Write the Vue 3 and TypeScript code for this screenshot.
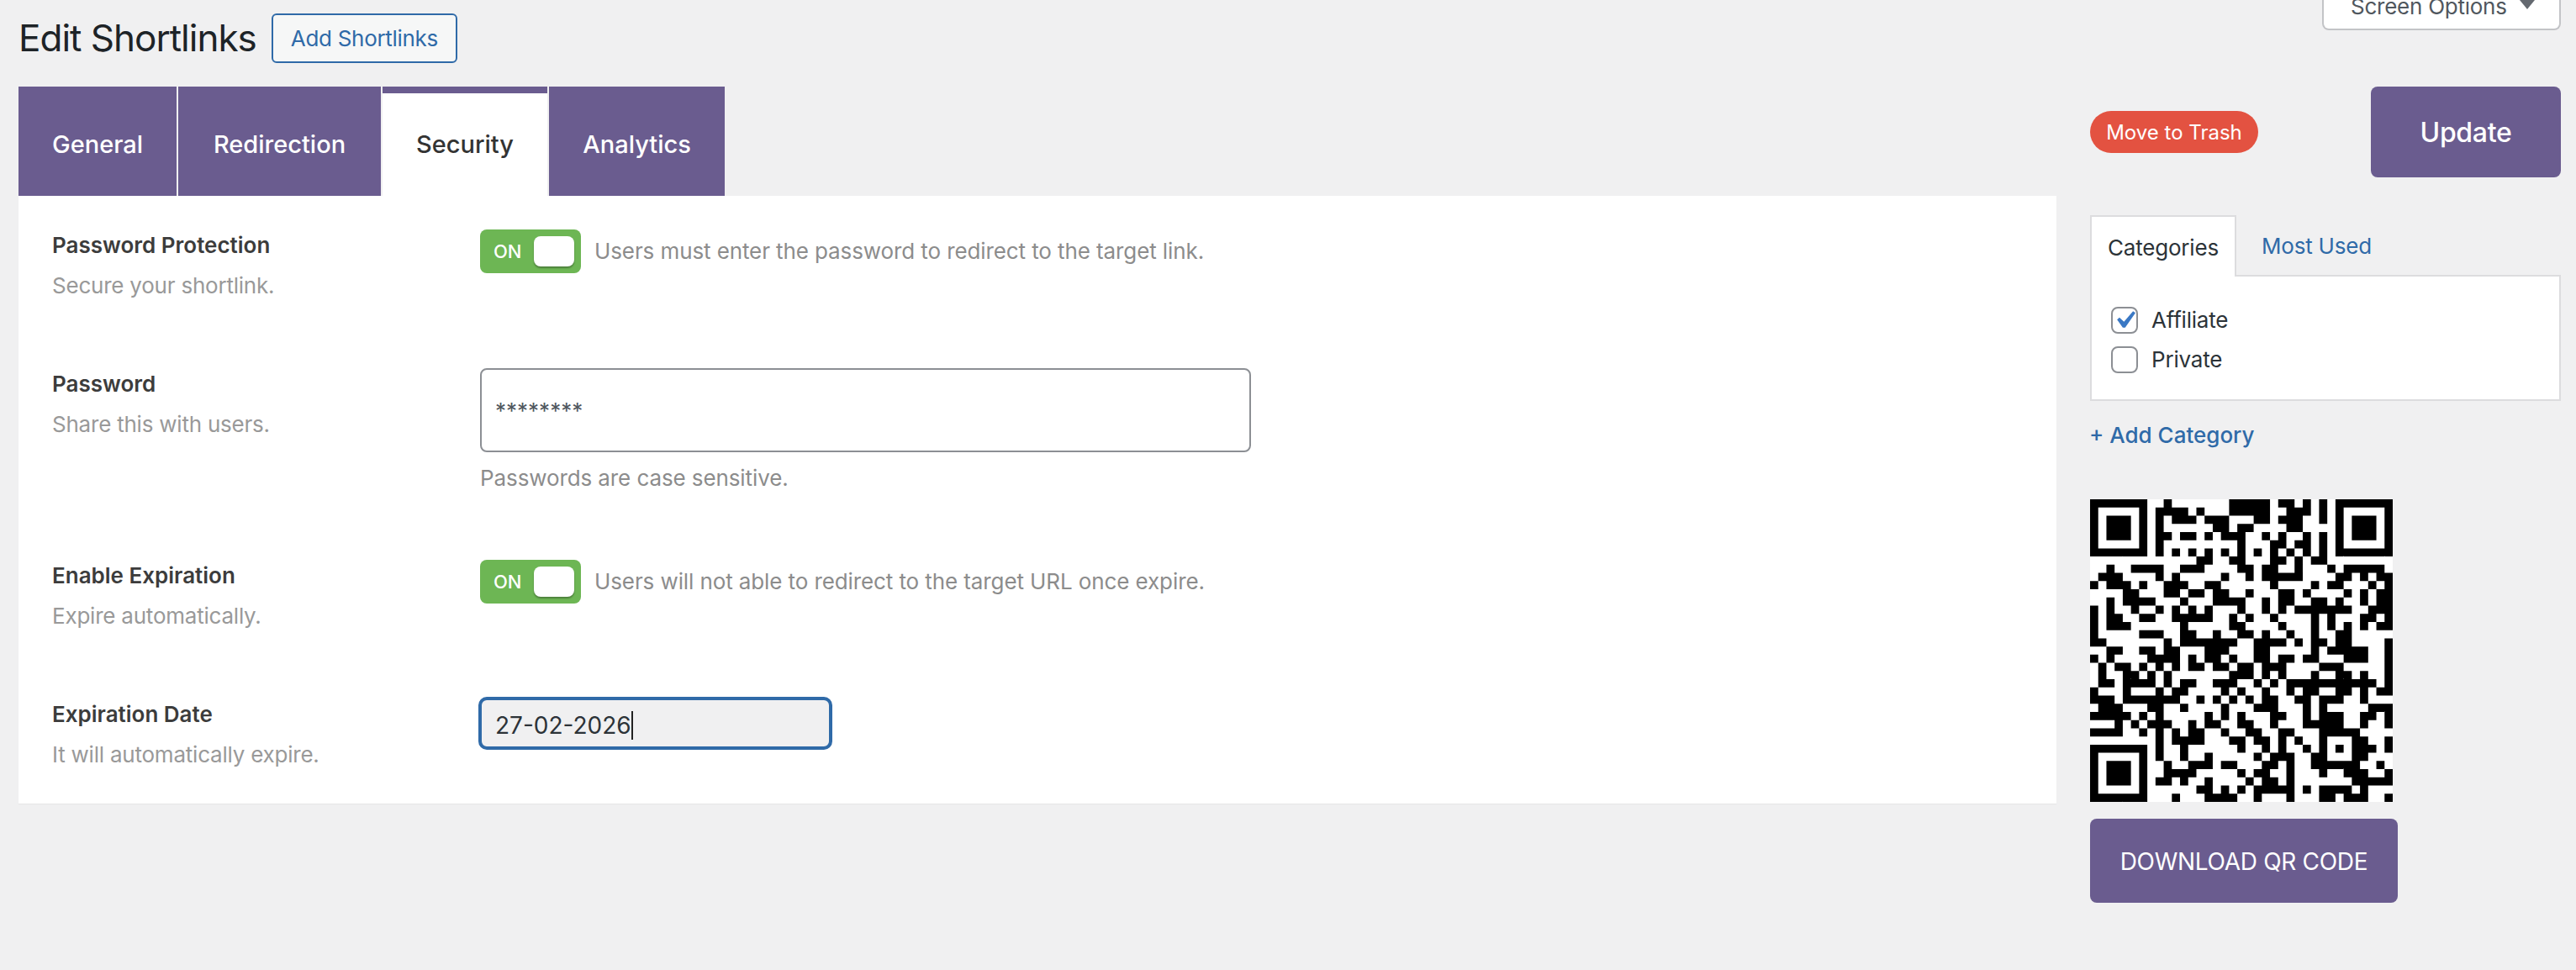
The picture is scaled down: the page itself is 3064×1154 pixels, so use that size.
<script setup lang="ts">
const qrRows: string[] = [
  '1111111 00 1 0000000 11111 0 11 0 1 0 1 0 1111111',
  '1000001 0 1111 0 1 000 11111 00 111 0 1 0 1000001',
  '1011101 0 1 0 111 0 111 000 11 0 111 00 1 0 1011101',
  '1011101 0 1 000000 11 0 11 0000 11 000 0 1011101',
  '1011101 0 11 0 11 0 1 0 111 00 1 0 1 00 1 0 1 0 1011101',
  '1000001 0 1 000000000 1 000 11 0 11 0 1 0 1000001',
  '1111111 0 101010101010101010101 0 1111111',
  '00000000 0 0000 11 00 11 000 11 0 1 0 11 0 0000000',
  '00100 1111 00 111 0000 11 0 11 00 1 000 1 0 11111 0',
  '0 111 0000 1 0 1 00000 1 00 1 0 11111 0000 11 0 1 0 11',
  '1 0 111 0 1 00 111 00 11 000000 1 0000 1 0 11 000 1 0 1',
  '0000 11 000 11 0 11 0 11 00 1 000 11 0 1 0000 1 0 1 0 11',
  '00 1 0 1111 000 1 000 1111 00 1 0 11 00 11 0 1 00 1 0 11',
  '1 0 1 00 1 00 1 0 1 0 1 0 1 000 1 00 1 0 1 0 1111111 00 111',
  '1 0 11 00 11 00 11111 00 1 0 1 00 1 0000 1 0 1 000 11 0 1',
  '1 0 111 000000 1 00000 11 0000 1 000 1 0 1 0 1 0 1 0 11',
  '1 00000 111 00 11 00 1 00 11 0 1 00 1 00 1 00 11 00000',
  '11 0000000 1 0 1111111 00 1111 0 1 0 11 0 11 0000 1',
  '00 11 00 11 0 11 000 111 000 11 00000 1 0 11111 00 1',
  '1 0 1 0000 1111 0 1 0 11 0 1 00 11 0 11 0 11 000 111 00 1',
  '0 1 0 11 0 1 0 1 0 1 0 11 0 11 0 11 0 111 0000 111 00000 1',
  '0 1 00 11 0 1 0 1 0000000 111 0 1 0 1 000 1 00 11 0 1 00 1',
  '0 11 0 1111 0 1 0 11 00 111 00 1 0 1 0 11111111111 0 1',
  '1 000 1 000 1 0 11 0000 1 0 1 00 1 00 1 0 11 00 11 0 1 0 11',
  '111 0 1111111 00 1 0 1 0 1 0 1 0 11 00 11 0 111 00 1 000',
  '0 111 000 11 00 1 0000 1 000 111 000 1 0 1 00000 111',
  '11111 0 1 0 1 00000 1 0 1 0 1 000 11 00 1 0 111 00 11 0 1',
  '000 1 0 1 0 111 00 1 0 11 00 11 00 1 000 11111 00 1 00 1',
  '1111 00 1 0 1 0 1 0 11 00 1 00 11 00 11 000 11111 0000',
  '00000000 1 0 1111 000 11 0 11 0 1 0 1 00 1 000 11 00 1',
  '1111111 0 1 00 1 000000 1 00 1 0 1 00 1 0 1 0 1 0 111 0 1',
  '1000001 0 1 00 1 00 1 00000 1 0 111 00 11 000 11 000',
  '1011101 00 1 00 111 0 11 000 11 0 1 00 111111 00 1 0',
  '1011101 00 1111 00000 1 0 11 00 1 000 1 00 111 00 1',
  '1011101 0 11 0 1 00 1 0000 1 0 11 0 1 0000000 11111',
  '1000001 000000 11 0 1 0 1 0 11111 0 1 0 1111 0 1 000',
  '1111111 000 1 000 1111 00 1 000 1 000 11 0 111 00 1',
]

const qrPath: string = qrRows
  .map((row, y) =>
    [...row.replace(/ /g, '')]
      .map((cell, x) => (cell === '1' ? `M${x} ${y}h1v1h-1z` : ''))
      .join(''),
  )
  .join('')

interface Field {
  label: string
  desc: string
  kind: 'toggle' | 'password' | 'date'
  hint: string
}

const fields: Field[] = [
  {
    label: 'Password Protection',
    desc: 'Secure your shortlink.',
    kind: 'toggle',
    hint: 'Users must enter the password to redirect to the target link.',
  },
  {
    label: 'Password',
    desc: 'Share this with users.',
    kind: 'password',
    hint: 'Passwords are case sensitive.',
  },
  {
    label: 'Enable Expiration',
    desc: 'Expire automatically.',
    kind: 'toggle',
    hint: 'Users will not able to redirect to the target URL once expire.',
  },
  {
    label: 'Expiration Date',
    desc: 'It will automatically expire.',
    kind: 'date',
    hint: '',
  },
]

const tabs: string[] = ['General', 'Redirection', 'Security', 'Analytics']
</script>

<template>
  <div class="page">
    <button class="screen-options">
      <span>Screen Options</span>
      <svg class="screen-arrow" width="18" height="11" viewBox="0 0 18 11"><path d="M0 0h18L9 11z" /></svg>
    </button>

    <main class="main">
      <header class="head">
        <h1 class="title">Edit Shortlinks</h1>
        <a class="add-btn">Add Shortlinks</a>
      </header>

      <nav class="tabs">
        <div v-for="tab in tabs" :key="tab" class="tab" :class="{ active: tab === 'Security' }">{{ tab }}</div>
      </nav>

      <section class="panel">
        <div v-for="field in fields" :key="field.label" class="row">
          <div class="label-col">
            <div class="label">{{ field.label }}</div>
            <div class="desc">{{ field.desc }}</div>
          </div>
          <div class="value-col" :class="{ 'value-date': field.kind === 'date' }">
            <div v-if="field.kind === 'toggle'" class="toggle-line">
              <div class="toggle">
                <span class="on">ON</span>
                <span class="knob"></span>
              </div>
              <span class="hint">{{ field.hint }}</span>
            </div>
            <template v-else-if="field.kind === 'password'">
              <input class="pass" type="text" value="********" readonly />
              <div class="hint pass-hint">{{ field.hint }}</div>
            </template>
            <div v-else class="date">
              <span>27-02-2026</span><span class="caret"></span>
            </div>
          </div>
        </div>
      </section>
    </main>

    <aside class="side">
      <div class="publish">
        <a class="trash">Move to Trash</a>
        <button class="update">Update</button>
      </div>

      <div class="cat-tabs">
        <div class="cat-tab">Categories</div>
        <a class="cat-link">Most Used</a>
      </div>
      <div class="cat-panel">
        <label class="check-row">
          <span class="box">
            <svg width="42" height="42" viewBox="0 0 20 20"><path d="M14.83 4.89l1.34.94-5.81 8.38H9.02L5.78 9.67l1.34-1.25 2.57 2.4z" /></svg>
          </span>
          Affiliate
        </label>
        <label class="check-row">
          <span class="box"></span>
          Private
        </label>
      </div>
      <a class="add-cat">+ Add Category</a>

      <svg class="qr" width="360" height="360" viewBox="0 0 37 37">
        <rect width="37" height="37" fill="#fff" />
        <path :d="qrPath" fill="#000" />
      </svg>
      <button class="download">DOWNLOAD QR CODE</button>
    </aside>
  </div>
</template>

<style scoped>
.page {
  position: relative;
  box-sizing: border-box;
  height: 1154px;
  overflow: hidden;
  padding: 0 18px 0 22px;
  display: grid;
  grid-template-columns: 2424px 560px;
  column-gap: 40px;
  align-items: start;
  background: #f0f0f1;
  font-family: Inter, "Liberation Sans", sans-serif;
  font-size: 26px;
  line-height: 36px;
  color: #3c434a;
}
.screen-options {
  position: absolute;
  top: -16px;
  right: 18px;
  box-sizing: border-box;
  width: 284px;
  height: 52px;
  display: flex;
  align-items: center;
  padding: 0 0 2px 32px;
  gap: 15px;
  background: #fff;
  border: 2px solid #c3c4c7;
  border-top: 0;
  border-radius: 0 0 8px 8px;
  font: inherit;
  letter-spacing: -0.25px;
  color: #50575e;
}
.screen-arrow {
  align-self: flex-start;
  margin-top: 16px;
  fill: #646970;
}
.head {
  display: flex;
  align-items: center;
  gap: 18px;
  height: 59px;
  padding-top: 16px;
  margin-bottom: 28px;
}
.title {
  margin: 0;
  font-size: 44px;
  line-height: 59px;
  font-weight: 400;
  letter-spacing: -1px;
  color: #1d2327;
}
.add-btn {
  box-sizing: border-box;
  height: 59px;
  display: flex;
  align-items: center;
  padding: 0 21px;
  border: 2px solid #2f6aa8;
  border-radius: 6px;
  background: #f6f7f7;
  color: #2f6aa8;
  letter-spacing: -0.3px;
}
.tabs {
  display: grid;
  grid-template-columns: 188px 241px 196px 209px;
  gap: 2px;
  height: 130px;
}
.tab {
  box-sizing: border-box;
  display: flex;
  align-items: center;
  justify-content: center;
  border-top: 8px solid #6a5c8f;
  background: #6a5c8f;
  color: #fff;
  font-size: 29px;
  font-weight: 500;
}
.tab.active {
  background: #fff;
  color: #333;
}
.panel {
  box-sizing: border-box;
  height: 723px;
  display: flex;
  flex-direction: column;
  gap: 69px;
  padding: 35px 0 0 40px;
  background: #fff;
  box-shadow: 0 1px 1px rgba(0, 0, 0, 0.04);
  line-height: 48px;
}
.row {
  display: grid;
  grid-template-columns: 509px 1fr;
}
.label {
  font-weight: 600;
  color: #3c3c3c;
}
.desc {
  color: #999;
  letter-spacing: -0.22px;
}
.value-col {
  padding-top: 5px;
}
.value-date {
  padding-top: 3px;
}
.toggle-line {
  display: flex;
  align-items: center;
  gap: 16px;
}
.toggle {
  box-sizing: border-box;
  width: 120px;
  height: 52px;
  display: flex;
  align-items: center;
  justify-content: space-between;
  padding: 0 8px 0 16px;
  background: #6db654;
  border-radius: 8px;
}
.on {
  color: #fff;
  font-size: 22px;
  font-weight: 500;
}
.knob {
  width: 48px;
  height: 36px;
  background: #fff;
  border-radius: 8px;
  box-shadow: 0 2px 2px rgba(0, 0, 0, 0.3);
}
.hint {
  color: #8c8c8c;
  letter-spacing: -0.1px;
}
.pass {
  display: block;
  box-sizing: border-box;
  width: 917px;
  height: 100px;
  padding: 0 16px;
  border: 2px solid #8c8f94;
  border-radius: 8px;
  background: #fff;
  font: inherit;
  color: #50575e;
  outline: none;
}
.pass-hint {
  margin-top: 8px;
  line-height: 46px;
}
.date {
  box-sizing: border-box;
  width: 421px;
  height: 63px;
  margin-left: -2px;
  display: flex;
  align-items: center;
  padding: 4px 16px 0;
  border: 4px solid #2f6aa8;
  border-radius: 10px;
  background: #f0f0f1;
  color: #2c3338;
  font-size: 28px;
}
.caret {
  width: 2px;
  height: 34px;
  background: #222;
}
.side {
  display: flex;
  flex-direction: column;
  align-items: flex-start;
  padding-top: 103px;
}
.publish {
  width: 100%;
  display: flex;
  align-items: center;
  justify-content: space-between;
}
.trash {
  box-sizing: border-box;
  width: 200px;
  height: 50px;
  padding-top: 2px;
  display: flex;
  align-items: center;
  justify-content: center;
  border-radius: 25px;
  background: #e35241;
  color: #fff;
  font-size: 24px;
}
.update {
  width: 226px;
  height: 108px;
  padding-top: 2px;
  border: 0;
  border-radius: 8px;
  background: #6a5c8f;
  color: #fff;
  font: inherit;
  font-size: 32px;
  font-weight: 500;
  letter-spacing: -0.3px;
}
.cat-tabs {
  display: flex;
  align-items: center;
  margin-top: 45px;
  height: 71px;
  position: relative;
  z-index: 1;
}
.cat-tab {
  box-sizing: border-box;
  width: 174px;
  height: 73px;
  margin-bottom: -2px;
  padding-top: 2px;
  display: flex;
  align-items: center;
  justify-content: center;
  border: 2px solid #dcdcde;
  border-bottom: 0;
  background: #fff;
  color: #2c3338;
  letter-spacing: -0.2px;
}
.cat-link {
  margin-left: 30px;
  padding-top: 3px;
  color: #2f6aa8;
  letter-spacing: -0.2px;
}
.cat-panel {
  box-sizing: border-box;
  width: 100%;
  height: 150px;
  display: flex;
  flex-direction: column;
  gap: 15px;
  padding: 36px 0 0 23px;
  border: 2px solid #dcdcde;
  background: #fff;
}
.check-row {
  display: flex;
  align-items: center;
  gap: 16px;
  height: 32px;
  color: #2c3338;
  letter-spacing: -0.2px;
}
.box {
  box-sizing: border-box;
  width: 32px;
  height: 32px;
  display: flex;
  align-items: center;
  justify-content: center;
  border: 2px solid #8c8f94;
  border-radius: 8px;
  background: #fff;
}
.box svg {
  flex: none;
  fill: #3a78c4;
}
.add-cat {
  margin-top: 23px;
  margin-left: -1px;
  color: #2f6aa8;
  font-weight: 500;
}
.qr {
  display: block;
  margin-top: 58px;
}
.download {
  width: 366px;
  height: 100px;
  margin-top: 20px;
  padding-top: 2px;
  border: 0;
  border-radius: 8px;
  background: #6a5c8f;
  color: #fff;
  font: inherit;
  font-size: 28px;
  letter-spacing: -0.3px;
}
</style>
